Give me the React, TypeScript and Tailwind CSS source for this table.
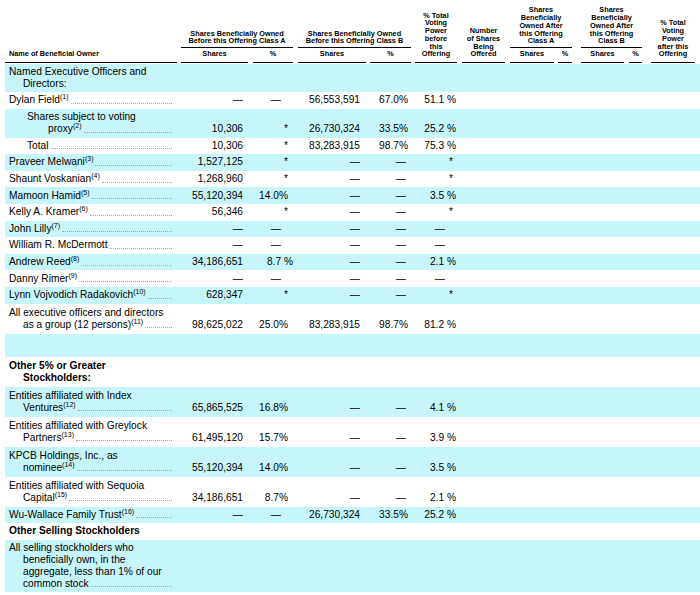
import type { ReactNode } from "react";

const COLS = "grid grid-cols-[174px_71px_45px_73px_45px_46px_48px_49px_20px_50px_20px_49px]";

type Row = {
  lines?: ReactNode[];
  band?: boolean;
  sub?: boolean;
  bold?: boolean;
  leader?: boolean;
  vals?: string[];
  py?: string;
  spacer?: boolean;
};

function Sup({ n }: { n: string }) {
  return <span className="relative -top-[4px] text-[7px] leading-none">({n})</span>;
}

const rows: Row[] = [
  { band: true, lines: ["Named Executive Officers and", "Directors:"], py: "py-[2px]" },
  { lines: [<>Dylan Field<Sup n="1" /></>], leader: true, vals: ["—", "—", "56,553,591", "67.0%", "51.1 %"] },
  {
    band: true,
    sub: true,
    lines: ["Shares subject to voting", <>proxy<Sup n="2" /></>],
    leader: true,
    vals: ["10,306", "*", "26,730,324", "33.5%", "25.2 %"],
    py: "py-[2.5px]",
  },
  { sub: true, lines: ["Total"], leader: true, vals: ["10,306", "*", "83,283,915", "98.7%", "75.3 %"] },
  { band: true, lines: [<>Praveer Melwani<Sup n="3" /></>], leader: true, vals: ["1,527,125", "*", "—", "—", "*"] },
  { lines: [<>Shaunt Voskanian<Sup n="4" /></>], leader: true, vals: ["1,268,960", "*", "—", "—", "*"] },
  { band: true, lines: [<>Mamoon Hamid<Sup n="5" /></>], leader: true, vals: ["55,120,394", "14.0%", "—", "—", "3.5 %"] },
  { lines: [<>Kelly A. Kramer<Sup n="6" /></>], leader: true, vals: ["56,346", "*", "—", "—", "*"] },
  { band: true, lines: [<>John Lilly<Sup n="7" /></>], leader: true, vals: ["—", "—", "—", "—", "—"] },
  { lines: ["William R. McDermott"], leader: true, vals: ["—", "—", "—", "—", "—"] },
  { band: true, lines: [<>Andrew Reed<Sup n="8" /></>], leader: true, vals: ["34,186,651", "8.7 %", "—", "—", "2.1 %"] },
  { lines: [<>Danny Rimer<Sup n="9" /></>], leader: true, vals: ["—", "—", "—", "—", "—"] },
  {
    band: true,
    lines: [<>Lynn Vojvodich Radakovich<Sup n="10" /></>],
    leader: true,
    vals: ["628,347", "*", "—", "—", "*"],
  },
  {
    lines: ["All executive officers and directors", <>as a group (12 persons)<Sup n="11" /></>],
    leader: true,
    vals: ["98,625,022", "25.0%", "83,283,915", "98.7%", "81.2 %"],
    py: "py-[3px]",
  },
  { band: true, spacer: true },
  { bold: true, lines: ["Other 5% or Greater", "Stockholders:"], py: "py-[3px]" },
  {
    band: true,
    lines: ["Entities affiliated with Index", <>Ventures<Sup n="12" /></>],
    leader: true,
    vals: ["65,865,525", "16.8%", "—", "—", "4.1 %"],
    py: "py-[3px]",
  },
  {
    lines: ["Entities affiliated with Greylock", <>Partners<Sup n="13" /></>],
    leader: true,
    vals: ["61,495,120", "15.7%", "—", "—", "3.9 %"],
    py: "py-[3px]",
  },
  {
    band: true,
    lines: ["KPCB Holdings, Inc., as", <>nominee<Sup n="14" /></>],
    leader: true,
    vals: ["55,120,394", "14.0%", "—", "—", "3.5 %"],
    py: "py-[3px]",
  },
  {
    lines: ["Entities affiliated with Sequoia", <>Capital<Sup n="15" /></>],
    leader: true,
    vals: ["34,186,651", "8.7%", "—", "—", "2.1 %"],
    py: "py-[3px]",
  },
  {
    band: true,
    lines: [<>Wu-Wallace Family Trust<Sup n="16" /></>],
    leader: true,
    vals: ["—", "—", "26,730,324", "33.5%", "25.2 %"],
  },
  { bold: true, lines: ["Other Selling Stockholders"] },
  {
    band: true,
    lines: ["All selling stockholders who", "beneficially own, in the", "aggregate, less than 1% of our", "common stock"],
    leader: true,
    py: "py-[2px]",
  },
];

// right padding per value column, so the figures line up as in the filing
function padFor(col: number, v: string) {
  const dash = v === "—";
  if (col === 0) return "pr-[7px]";
  if (col === 1) return dash ? "pr-[14px]" : v.endsWith(" %") ? "pr-[2px]" : "pr-[7px]";
  if (col === 2) return "pr-[8px]";
  if (col === 3) return dash ? "pr-[7px]" : "pr-[5px]";
  return dash ? "pr-[14px]" : v === "*" ? "pr-[6px]" : "pr-[3px]";
}

function NameCell({ row }: { row: Row }) {
  const lines = row.lines ?? [];
  const first = row.sub ? "pl-[22px]" : "pl-[4px]";
  const rest = row.sub ? "pl-[43px]" : "pl-[18px]";
  return (
    <div className={`pr-[7px] ${row.bold ? "font-bold" : ""}`}>
      {lines.map((line, i) => {
        const last = i === lines.length - 1;
        const pad = i === 0 ? first : rest;
        if (last && row.leader) {
          return (
            <div key={i} className={`flex items-end whitespace-nowrap ${pad}`}>
              <span>{line}</span>
              <span className="mb-[2.5px] ml-[2px] flex-1 border-b border-dotted border-[#a8a8a8]" />
            </div>
          );
        }
        return (
          <div key={i} className={`whitespace-nowrap ${pad}`}>
            {line}
          </div>
        );
      })}
    </div>
  );
}

function DataRow({ row }: { row: Row }) {
  const bg = row.band ? "bg-[#c6f6fa]" : "bg-white";
  if (row.spacer) return <div className={`h-[23px] ${bg}`} />;
  return (
    <div className={`${COLS} items-end ${row.py ?? "py-[2.3px]"} ${bg}`}>
      <NameCell row={row} />
      {(row.vals ?? []).map((v, i) => (
        <div key={i} className={`whitespace-nowrap text-right ${padFor(i, v)}`}>
          {v}
        </div>
      ))}
    </div>
  );
}

function Header() {
  const cell = "flex flex-col justify-end";
  const sub = "border-b border-black pb-[4px] mb-[1px] text-center";
  const grp = "border-b border-black pb-[2px] text-center";
  return (
    <div className={`${COLS} grid-rows-[48px_16px] text-[7.3px] font-bold leading-[7.7px] text-black`}>
      <div className={`${cell} col-start-1 row-span-2 row-start-1`}>
        <div className="mb-[1px] mr-[2px] border-b border-black pb-[4px] pl-[4px] text-left">Name of Beneficial Owner</div>
      </div>
      <div className={`${cell} col-span-2 col-start-2 row-start-1`}>
        <div className={`${grp} mx-[2px]`}>
          Shares Beneficially Owned
          <br />
          Before this Offering Class A
        </div>
      </div>
      <div className={`${cell} col-span-2 col-start-4 row-start-1`}>
        <div className={`${grp} ml-[3px] mr-[2px]`}>
          Shares Beneficially Owned
          <br />
          Before this Offering Class B
        </div>
      </div>
      <div className={`${cell} col-start-6 row-span-2 row-start-1`}>
        <div className={`${sub} mx-[2px]`}>
          % Total
          <br />
          Voting
          <br />
          Power
          <br />
          before
          <br />
          this
          <br />
          Offering
        </div>
      </div>
      <div className={`${cell} col-start-7 row-span-2 row-start-1`}>
        <div className={`${sub} ml-[3px] mr-[2px]`}>
          Number
          <br />
          of Shares
          <br />
          Being
          <br />
          Offered
        </div>
      </div>
      <div className={`${cell} col-span-2 col-start-8 row-start-1`}>
        <div className={`${grp} ml-[3px] mr-[4px]`}>
          Shares
          <br />
          Beneficially
          <br />
          Owned After
          <br />
          this Offering
          <br />
          Class A
        </div>
      </div>
      <div className={`${cell} col-span-2 col-start-10 row-start-1`}>
        <div className={`${grp} ml-[5px] mr-[4px]`}>
          Shares
          <br />
          Beneficially
          <br />
          Owned After
          <br />
          this Offering
          <br />
          Class B
        </div>
      </div>
      <div className={`${cell} col-start-12 row-span-2 row-start-1`}>
        <div className={`${sub} ml-[5px]`}>
          % Total
          <br />
          Voting
          <br />
          Power
          <br />
          after this
          <br />
          Offering
        </div>
      </div>

      <div className={`${cell} col-start-2 row-start-2`}>
        <div className={`${sub} mx-[2px]`}>Shares</div>
      </div>
      <div className={`${cell} col-start-3 row-start-2`}>
        <div className={`${sub} ml-[3px] mr-[2px]`}>%</div>
      </div>
      <div className={`${cell} col-start-4 row-start-2`}>
        <div className={`${sub} ml-[3px] mr-[2px]`}>Shares</div>
      </div>
      <div className={`${cell} col-start-5 row-start-2`}>
        <div className={`${sub} mx-[2px]`}>%</div>
      </div>
      <div className={`${cell} col-start-8 row-start-2`}>
        <div className={`${sub} ml-[3px] mr-[2px]`}>Shares</div>
      </div>
      <div className={`${cell} col-start-9 row-start-2`}>
        <div className={`${sub} ml-[2px] mr-[4px]`}>%</div>
      </div>
      <div className={`${cell} col-start-10 row-start-2`}>
        <div className={`${sub} ml-[5px] mr-[2px]`}>Shares</div>
      </div>
      <div className={`${cell} col-start-11 row-start-2`}>
        <div className={`${sub} ml-[3px] mr-[4px]`}>%</div>
      </div>
    </div>
  );
}

export default function App() {
  return (
    <div className="h-[595px] w-[700px] overflow-hidden bg-white pl-[5px] font-['Liberation_Sans',Arial,sans-serif] text-black">
      <Header />
      <div className="text-[10.2px] leading-[12px]">
        {rows.map((row, i) => (
          <DataRow key={i} row={row} />
        ))}
      </div>
    </div>
  );
}
